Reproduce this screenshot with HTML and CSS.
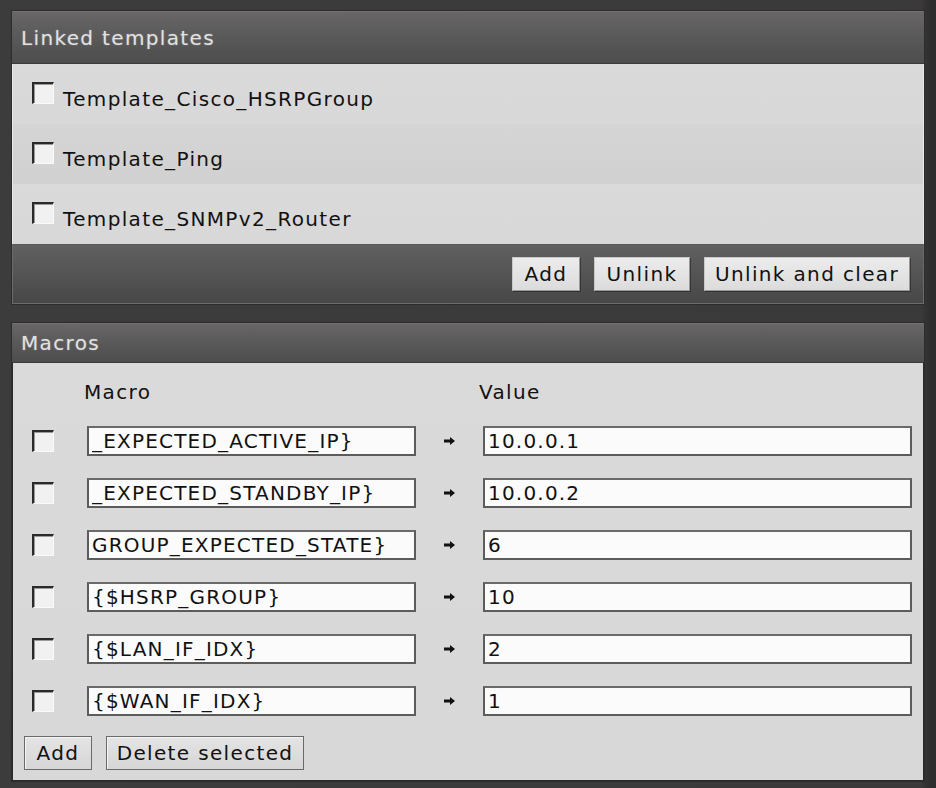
FILE: index.html
```html
<!DOCTYPE html>
<html>
<head>
<meta charset="utf-8">
<link rel="stylesheet" href="styles.css">
</head>
<body>
<div class="page">
  <section class="panel">
    <div class="panel-head head-tall">Linked templates</div>
    <div class="tpl-list">
      <div class="tpl-row"><input type="checkbox" class="cb"><span class="tpl-name">Template_Cisco_HSRPGroup</span></div>
      <div class="tpl-row alt"><input type="checkbox" class="cb"><span class="tpl-name">Template_Ping</span></div>
      <div class="tpl-row"><input type="checkbox" class="cb"><span class="tpl-name">Template_SNMPv2_Router</span></div>
    </div>
    <div class="panel-foot">
      <button class="btn btn-add">Add</button>
      <button class="btn btn-unlink">Unlink</button>
      <button class="btn btn-clear">Unlink and clear</button>
    </div>
  </section>

  <section class="panel panel-macros">
    <div class="panel-head head-short">Macros</div>
    <div class="macro-body">
      <div class="macro-grid">
        <span></span>
        <span class="col-title col-macro">Macro</span>
        <span></span>
        <span class="col-title col-value">Value</span>

        <input type="checkbox" class="cb">
        <input class="field" type="text" value="_EXPECTED_ACTIVE_IP}">
        <svg class="arrow" width="11" height="8" viewBox="0 0 11 8"><path d="M0 2.6h6V0l5 4-5 4V5.4H0z" fill="#111"/></svg>
        <input class="field" type="text" value="10.0.0.1">

        <input type="checkbox" class="cb">
        <input class="field" type="text" value="_EXPECTED_STANDBY_IP}">
        <svg class="arrow" width="11" height="8" viewBox="0 0 11 8"><path d="M0 2.6h6V0l5 4-5 4V5.4H0z" fill="#111"/></svg>
        <input class="field" type="text" value="10.0.0.2">

        <input type="checkbox" class="cb">
        <input class="field" type="text" value="GROUP_EXPECTED_STATE}">
        <svg class="arrow" width="11" height="8" viewBox="0 0 11 8"><path d="M0 2.6h6V0l5 4-5 4V5.4H0z" fill="#111"/></svg>
        <input class="field" type="text" value="6">

        <input type="checkbox" class="cb">
        <input class="field" type="text" value="{$HSRP_GROUP}">
        <svg class="arrow" width="11" height="8" viewBox="0 0 11 8"><path d="M0 2.6h6V0l5 4-5 4V5.4H0z" fill="#111"/></svg>
        <input class="field" type="text" value="10">

        <input type="checkbox" class="cb">
        <input class="field" type="text" value="{$LAN_IF_IDX}">
        <svg class="arrow" width="11" height="8" viewBox="0 0 11 8"><path d="M0 2.6h6V0l5 4-5 4V5.4H0z" fill="#111"/></svg>
        <input class="field" type="text" value="2">

        <input type="checkbox" class="cb">
        <input class="field" type="text" value="{$WAN_IF_IDX}">
        <svg class="arrow" width="11" height="8" viewBox="0 0 11 8"><path d="M0 2.6h6V0l5 4-5 4V5.4H0z" fill="#111"/></svg>
        <input class="field" type="text" value="1">
      </div>
      <div class="macro-actions">
        <button class="btn btn-light btn-add">Add</button>
        <button class="btn btn-light btn-del">Delete selected</button>
      </div>
    </div>
  </section>
</div>
</body>
</html>
```

FILE: styles.css
```css
* { box-sizing: border-box; }

html, body {
  margin: 0;
  padding: 0;
  background: #3b3a3a;
}

body {
  font-family: "DejaVu Sans", Verdana, sans-serif;
  font-size: 20px;
  letter-spacing: 1.35px;
  color: #111;
}

.page {
  padding: 10px 11px 0 11px;
  width: 936px;
  height: 788px;
  background: linear-gradient(to right, #3d3c3c 0, #3b3a3a 920px, #2f2e2e 930px);
}

.panel {
  width: 914px;
  border: 1px solid #2c2c2c;
}

.panel-head {
  display: flex;
  align-items: center;
  padding: 0 9px;
  color: #e2e2e2;
  text-shadow: 0 0 2px rgba(255,255,255,0.25);
  background: linear-gradient(to bottom, #686666 0%, #5b5a5a 45%, #4d4d4d 100%);
  border-top: 1px solid #747272;
  border-bottom: 1px solid #3a3a3a;
}

.head-tall { height: 53px; }
.head-short { height: 40px; }

.tpl-list {
  background: #d8d8d8;
  border-left: 1px solid #e8e8e8;
  border-right: 1px solid #eaeaea;
}

.tpl-row {
  height: 60px;
  display: flex;
  align-items: flex-start;
  padding: 18px 0 0 19px;
  background: linear-gradient(to bottom, #dadada, #d8d8d8);
}

.tpl-row.alt {
  background: linear-gradient(to bottom, #d5d5d5, #d1d1d1);
}

.tpl-name {
  margin-left: 9px;
  margin-top: 5px;
  line-height: 24px;
  white-space: nowrap;
}

.cb {
  appearance: none;
  -webkit-appearance: none;
  margin: 0;
  width: 22px;
  height: 22px;
  background: #f1f1f1;
  border-top: 2px solid #2a2a2a;
  border-left: 2px solid #2a2a2a;
  border-right: 1px solid #fafafa;
  border-bottom: 1px solid #fafafa;
  box-shadow: inset 1px 1px 0 #9a9a9a;
}

.panel-foot {
  height: 60px;
  display: flex;
  justify-content: flex-end;
  align-items: flex-start;
  gap: 14px;
  padding: 12px 13px 0 0;
  background: linear-gradient(to bottom, #616060 0%, #555454 50%, #474747 100%);
  border: 1px solid #6c6b6b;
  border-top: 1px solid #5a5a5a;
}

.btn {
  font-family: "DejaVu Sans", Verdana, sans-serif;
  font-size: 20px;
  letter-spacing: 1.35px;
  color: #111;
  height: 34px;
  padding: 0;
  margin: 0;
  white-space: nowrap;
  text-align: center;
  background: linear-gradient(to bottom, #ececec, #dcdcdc);
  border: 1px solid #9a9a9a;
  border-top-color: #c8c8c8;
  border-left-color: #c8c8c8;
  box-shadow: 1px 1px 0 rgba(0,0,0,0.35);
  line-height: 30px;
}

.btn-add { width: 68px; }
.btn-unlink { width: 96px; }
.btn-clear { width: 206px; }
.btn-del { width: 198px; }

.btn-light {
  border: 1px solid #6a6a6a;
  background: linear-gradient(to bottom, #e4e4e4, #d6d6d6);
  box-shadow: inset 1px 1px 0 #f4f4f4;
}

.panel-macros {
  margin-top: 17px;
}

.macro-body {
  height: 418px;
  background: linear-gradient(to bottom, #dadada, #d8d8d8);
  border: 1px solid #2a2a2a;
  border-top: none;
  padding: 16px 13px 0 19px;
}

.macro-grid {
  display: grid;
  grid-template-columns: 55px 329px 67px 429px;
  grid-template-rows: 24px;
  grid-auto-rows: 30px;
  row-gap: 22px;
  align-items: center;
  margin-top: 1px;
}

.col-title {
  line-height: 24px;
}

.col-macro { margin-left: -3px; }
.col-value { margin-left: -4px; }

.macro-grid .cb {
  justify-self: start;
}

.field {
  width: 100%;
  height: 30px;
  margin: 0;
  padding: 0 3px;
  font-family: "DejaVu Sans", Verdana, sans-serif;
  font-size: 20px;
  letter-spacing: 1.2px;
  color: #111;
  background: #fbfbfb;
  border: 2px solid #5c5c5c;
  border-top-color: #6a6a6a;
  outline: none;
}

.arrow {
  justify-self: center;
}

.macro-actions {
  display: flex;
  gap: 14px;
  margin: 20px 0 0 -8px;
}
```
